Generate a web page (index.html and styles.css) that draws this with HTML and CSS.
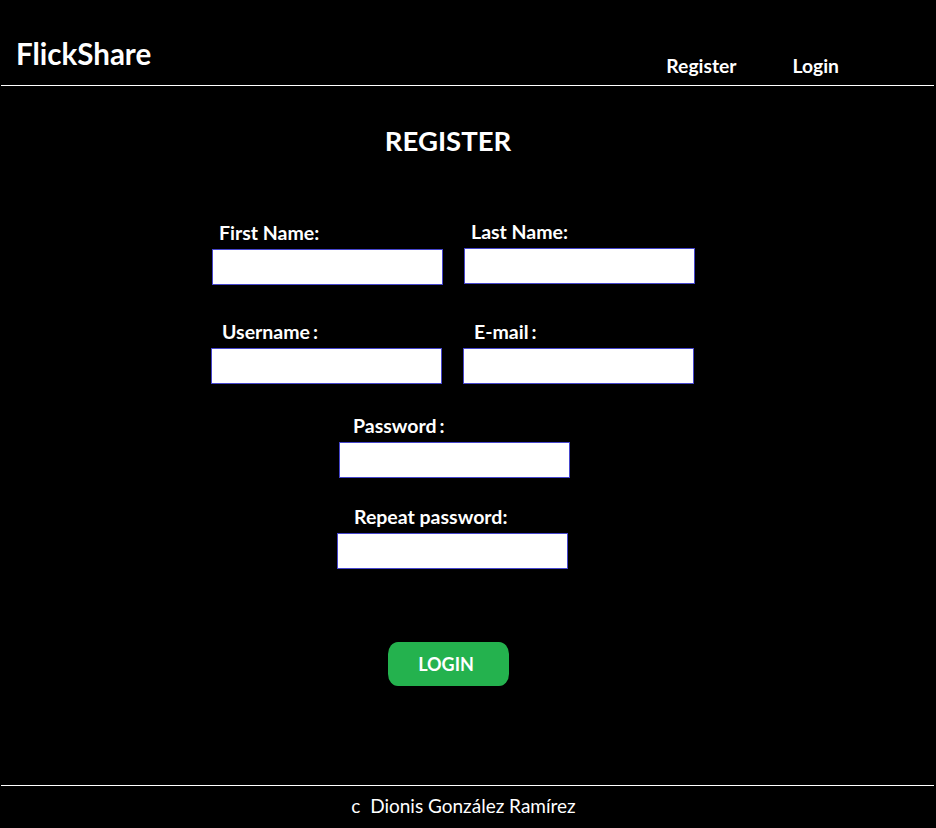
FILE: index.html
```html
<!DOCTYPE html>
<html lang="en">
<head>
<meta charset="utf-8">
<title>FlickShare - Register</title>
<link rel="stylesheet" href="styles.css">
</head>
<body>
<header class="topbar">
  <div class="brand">FlickShare</div>
  <nav class="nav">
    <a class="nav-link" href="#">Register</a>
    <a class="nav-link" href="#">Login</a>
  </nav>
</header>
<main class="content">
  <h1 class="title">REGISTER</h1>
  <form class="form">
    <div class="row row-1">
      <div class="field">
        <label class="label lbl-first">First Name:</label>
        <input class="input" type="text">
      </div>
      <div class="field field-up">
        <label class="label lbl-last">Last Name:</label>
        <input class="input" type="text">
      </div>
    </div>
    <div class="row row-2">
      <div class="field">
        <label class="label lbl-user">Username<span class="colon">:</span></label>
        <input class="input" type="text">
      </div>
      <div class="field">
        <label class="label lbl-mail">E-mail<span class="colon">:</span></label>
        <input class="input" type="email">
      </div>
    </div>
    <div class="row row-3">
      <div class="field">
        <label class="label lbl-pass">Password<span class="colon">:</span></label>
        <input class="input" type="password">
      </div>
    </div>
    <div class="row row-4">
      <div class="field">
        <label class="label lbl-rep">Repeat password:</label>
        <input class="input" type="password">
      </div>
    </div>
    <div class="actions">
      <button class="btn" type="button">LOGIN</button>
    </div>
  </form>
</main>
<footer class="footer">
  <p class="copy">c&nbsp; Dionis González Ramírez</p>
</footer>
</body>
</html>
```
FILE: styles.css
```css
html, body {
  margin: 0;
  padding: 0;
  background: #000;
  color: #fff;
  font-family: Lato, "Open Sans", "Liberation Sans", sans-serif;
}

.topbar {
  height: 85px;
  margin: 0 2px 0 1px;
  border-bottom: 1px solid #fff;
  display: flex;
  align-items: flex-start;
}

.brand {
  font-size: 29.5px;
  font-weight: 700;
  line-height: 34px;
  margin: 37px 0 0 15px;
}

.nav {
  display: flex;
  gap: 56px;
  margin: 54px 95px 0 auto;
}

.nav-link {
  color: #fff;
  text-decoration: none;
  font-size: 19.3px;
  font-weight: 700;
  line-height: 24px;
}

.content {
  height: 699px;
  display: flex;
  flex-direction: column;
}

.title {
  margin: 38px 0 0 0;
  text-align: center;
  font-size: 27.5px;
  font-weight: 700;
  line-height: 34px;
  padding-right: 40px;
}

.form {
  display: flex;
  flex-direction: column;
  margin-top: 64px;
}

.row {
  display: flex;
  gap: 21px;
}

.row-1 { padding-left: 212px; }
.row-2 { padding-left: 211px; margin-top: 36px; }
.row-3 { padding-left: 339px; margin-top: 31px; }
.row-4 { padding-left: 337px; margin-top: 28px; }

.field {
  display: flex;
  flex-direction: column;
}

.field-up { margin-top: -1px; }

.label {
  font-size: 19.5px;
  font-weight: 700;
  line-height: 22px;
  height: 22px;
  margin-bottom: 5px;
  white-space: nowrap;
}

.colon { margin-left: 3px; }

.lbl-first { padding-left: 7px; }
.lbl-last { padding-left: 7px; }
.lbl-user { padding-left: 11px; }
.lbl-mail { padding-left: 11px; }
.lbl-pass { padding-left: 14px; }
.lbl-rep { padding-left: 17px; }

.input {
  box-sizing: border-box;
  width: 231px;
  height: 36px;
  margin: 0;
  background: #fff;
  border: 1px solid #4646cc;
  border-radius: 0;
  padding: 0 6px;
  outline: none;
}

.actions {
  display: flex;
  justify-content: center;
  padding-right: 39px;
  margin-top: 73px;
}

.btn {
  width: 121px;
  height: 44px;
  border: none;
  border-radius: 10px / 12px;
  background: #24b24e;
  color: #fff;
  font-family: inherit;
  font-size: 18px;
  font-weight: 700;
  padding: 0 5px 0 0;
  cursor: pointer;
}

.footer {
  margin: 0 2px 0 1px;
  border-top: 1px solid #fff;
  text-align: center;
}

.copy {
  margin: 8px 0 0 0;
  font-size: 19px;
  line-height: 24px;
  padding-right: 8px;
}
```
